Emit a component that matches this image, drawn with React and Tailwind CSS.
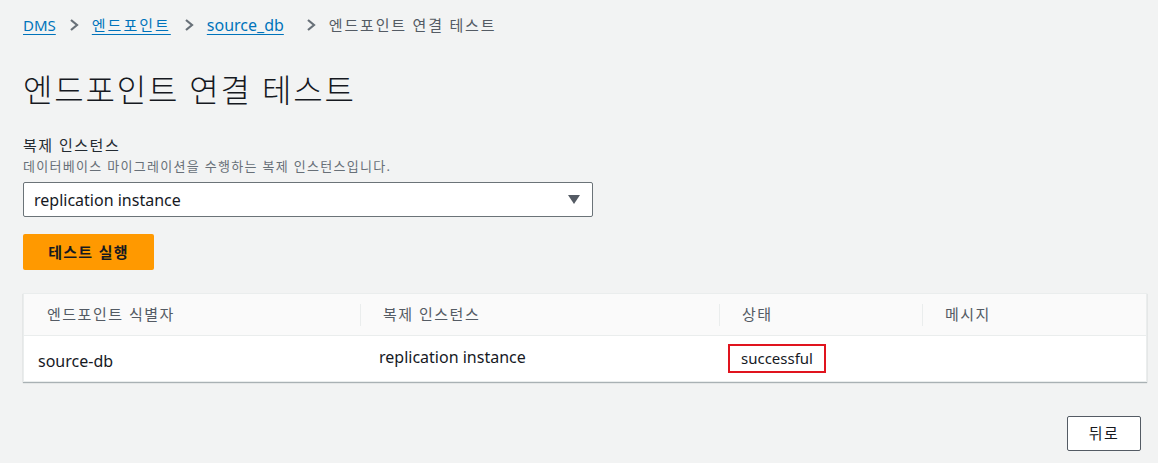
const font = { fontFamily: '"Noto Sans", "Noto Sans CJK KR", sans-serif' };

function Chevron() {
  return (
    <svg width="12" height="14" viewBox="0 0 12 14" className="mx-[12px] shrink-0">
      <path d="M3 2 L9 7 L3 12" fill="none" stroke="#687078" strokeWidth="2.2" />
    </svg>
  );
}

const columns = ['엔드포인트 식별자', '복제 인스턴스', '상태', '메시지'];

export default function App() {
  return (
    <div className="min-h-[463px] w-full bg-[#f2f3f3] text-[#16191f]" style={font}>
      <div className="pl-[23px] pr-[11px] pt-[13px]">
        <nav className="flex items-center h-[24px] text-[15px]">
          <a className="text-[#0073bb] underline underline-offset-[3px]">DMS</a>
          <Chevron />
          <a className="text-[#0073bb] underline underline-offset-[3px] tracking-[2px]">엔드포인트</a>
          <Chevron />
          <a className="text-[#0073bb] underline underline-offset-[3px] text-[16px]">source_db</a>
          <span className="w-[9px]" />
          <Chevron />
          <span className="text-[#545b64] tracking-[1.8px]">엔드포인트 연결 테스트</span>
        </nav>

        <h1 className="mt-[31px] text-[32px] leading-[44px] font-light tracking-[1.8px]">엔드포인트 연결 테스트</h1>

        <div className="mt-[22px] text-[15px] leading-[22px] tracking-[1.5px] text-[#232a31]">복제 인스턴스</div>
        <div className="text-[13px] leading-[20px] text-[#687078] tracking-[1.3px]">데이터베이스 마이그레이션을 수행하는 복제 인스턴스입니다.</div>

        <div className="mt-[6px] w-[570px] h-[35px] bg-white border border-[#6b7378] rounded-[2px] flex items-center justify-between pl-[10px] pr-[12px] text-[16px]">
          <span>replication instance</span>
          <svg width="12" height="9" viewBox="0 0 12 9">
            <path d="M0 0 H12 L6 9 Z" fill="#545b64" />
          </svg>
        </div>

        <button className="mt-[17px] w-[131px] h-[36px] bg-[#ff9900] rounded-[2px] text-[15px] font-semibold text-[#16191f] tracking-[1.3px]">
          테스트 실행
        </button>

        <div className="mt-[23px] w-[1124px] bg-white border border-[#eaeded] shadow-[0_1px_1px_0_rgba(0,28,36,0.3)]">
          <div className="grid grid-cols-[336px_359px_203px_1fr] h-[42px] bg-[#fafafa] border-b border-[#eaeded] text-[15px] tracking-[1.5px] text-[#545b64]">
            {columns.map((c, i) => (
              <div key={c} className="flex items-center">
                {i > 0 && <span className="w-px h-[22px] bg-[#eaeded]" />}
                <span className={i === 0 ? 'pl-[23px]' : 'pl-[22px]'}>{c}</span>
              </div>
            ))}
          </div>
          <div className="grid grid-cols-[336px_359px_203px_1fr] h-[45px] text-[16px]">
            <div className="flex items-center pl-[14px] pt-[4px]">source-db</div>
            <div className="flex items-center pl-[19px] pb-[4px]">replication instance</div>
            <div className="flex items-center pl-[9px]">
              <span className="border-2 border-[#e0141e] px-[11px] h-[29px] flex items-center text-[15px]">successful</span>
            </div>
            <div />
          </div>
        </div>

        <div className="mt-[34px] w-[1124px] flex justify-end pr-[6px]">
          <button className="w-[74px] h-[35px] bg-white border border-[#545b64] rounded-[2px] text-[15px] tracking-[1.5px]">뒤로</button>
        </div>
      </div>
    </div>
  );
}
